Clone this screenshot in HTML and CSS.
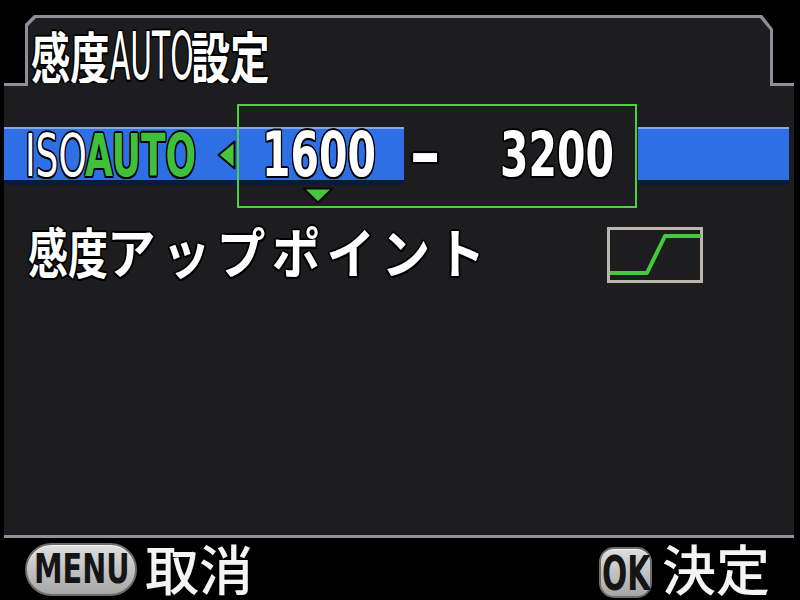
FILE: index.html
```html
<!DOCTYPE html>
<html lang="ja">
<head>
<meta charset="utf-8">
<title>感度AUTO設定</title>
<link rel="stylesheet" href="styles.css">
</head>
<body>
<div class="screen">
  <div class="tab">
    <div class="tab-in">
      <h1 class="title">
        <span class="seg w-t1"><span class="sx s70">感度</span></span>
        <span class="seg w-t2 lat"><span class="sx s45">AUTO</span></span>
        <span class="seg w-t3"><span class="sx s70">設定</span></span>
      </h1>
    </div>
  </div>
  <div class="body">
    <div class="row1">
      <div class="bar bar-left">
        <span class="seg w-iso lat iso"><span class="sx s62">ISO</span></span>
        <span class="seg w-auto lat auto"><span class="sx s62">AUTO</span></span>
        <svg class="tri-left" width="19" height="30" viewBox="0 0 19 30"><polygon points="1.5,15 17.5,1.5 17.5,28.5" fill="#45c83c" stroke="#0b0b0b" stroke-width="2" stroke-linejoin="round"/></svg>
        <span class="seg w-num1 lat num"><span class="sx s66">1600</span></span>
      </div>
      <div class="mid">
        <span class="seg w-dash lat num"><span class="sx dash">-</span></span>
        <span class="seg w-num2 lat num"><span class="sx s66">3200</span></span>
      </div>
      <div class="bar bar-right"></div>
      <div class="selbox"></div>
      <svg class="tri-down" width="32" height="17" viewBox="0 0 32 17"><polygon points="1.5,1.5 30.5,1.5 16,15.5" fill="#45c83c" stroke="#0b0b0b" stroke-width="2" stroke-linejoin="round"/></svg>
    </div>
    <div class="row2">
      <span class="label2"><span class="seg w-k"><span class="sx s74">感度</span></span><span class="seg w-kana"><span class="sx s90 kana">アップポイント</span></span></span>
      <svg class="curve" width="96" height="56" viewBox="0 0 96 56">
        <rect x="1.5" y="1.5" width="93" height="53" fill="none" stroke="#bdb6ae" stroke-width="3"/>
        <polyline points="3,46 40,46 58,9 94,9" fill="none" stroke="#44c83c" stroke-width="4" stroke-linejoin="round"/>
      </svg>
    </div>
  </div>
  <div class="footer">
    <span class="pill menu"><span class="seg w-menu lat"><span class="sx s70">MENU</span></span></span>
    <span class="ftxt">取消</span>
    <span class="spacer"></span>
    <span class="pill ok"><span class="seg w-ok lat"><span class="sx s62">OK</span></span></span>
    <span class="ftxt ftxt-ok">決定</span>
  </div>
</div>
</body>
</html>
```
FILE: styles.css
```css
:root {
  --panel: #1d1d1f;
  --line: #8d9096;
  --ol: 2px 0 0 #000, -2px 0 0 #000, 0 2px 0 #000, 0 -2px 0 #000,
        1.5px 1.5px 0 #000, -1.5px 1.5px 0 #000, 1.5px -1.5px 0 #000, -1.5px -1.5px 0 #000;
}

* { box-sizing: border-box; }

body {
  margin: 0;
  background: #000;
}

.screen {
  width: 800px;
  height: 600px;
  display: flex;
  flex-direction: column;
  background: #000;
  color: #fff;
  font-family: "Noto Sans CJK JP", sans-serif;
  overflow: hidden;
}

.lat { font-family: "DejaVu Sans", sans-serif; }

.seg {
  display: inline-block;
  flex: none;
  white-space: nowrap;
}

.sx {
  display: inline-block;
  white-space: nowrap;
  transform-origin: 0 50%;
}
.s45 { transform: scaleX(0.45); }
.s62 { transform: scaleX(0.62); }
.s66 { transform: scaleX(0.66); }
.s70 { transform: scaleX(0.7); }
.s74 { transform: scaleX(0.74); }
.s90 { transform: scaleX(0.9); }

/* ---- header tab ---- */
.tab {
  flex: none;
  margin: 15px 0 0 25px;
  width: 748px;
  height: 68px;
  background: var(--line);
  display: flex;
  flex-direction: column;
  clip-path: polygon(9px 0, calc(100% - 11px) 0, 100% 14px, 100% 100%, 0 100%, 0 9px);
}

.tab-in {
  flex: 1;
  margin: 3px 3px 0;
  background: var(--panel);
  clip-path: polygon(8px 0, calc(100% - 10px) 0, 100% 12px, 100% 100%, 0 100%, 0 8px);
}

.title {
  margin: 0;
  padding: 6px 0 0 3px;
  display: flex;
  align-items: baseline;
  font-size: 56px;
  font-weight: 700;
  line-height: 1;
  text-shadow: var(--ol);
}
.title .lat { font-size: 66px; font-weight: 400; }
.w-t1 { width: 79px; }
.w-t2 { width: 81px; }
.w-t3 { width: 80px; }

/* ---- panel body ---- */
.body {
  flex: none;
  margin-left: 4px;
  width: 790px;
  height: 455px;
  border-bottom: 3px solid var(--line);
  background:
    linear-gradient(var(--line), var(--line)) left top / 24px 3px no-repeat,
    linear-gradient(var(--line), var(--line)) right top / 24px 3px no-repeat,
    var(--panel);
}

.row1 {
  position: relative;
  margin-top: 21px;
  height: 104px;
  padding-top: 23px;
  display: flex;
  align-items: flex-start;
}

.bar {
  flex: none;
  height: 58px;
  border-top: 2px solid #86a6ea;
  border-bottom: 5px solid #0b1a3a;
  background: #2f6fe6;
}

.bar-left {
  width: 400px;
  padding-left: 21px;
  display: flex;
  align-items: baseline;
}

.mid {
  flex: none;
  height: 58px;
  padding-top: 2px;
  display: flex;
  align-items: baseline;
}

.bar-right {
  width: 151px;
  margin-left: 4px;
}

.iso {
  font-size: 58px;
  line-height: 51px;
  color: #fff;
  text-shadow: var(--ol);
}
.auto {
  font-size: 58px;
  line-height: 51px;
  font-weight: 700;
  color: #3fbf3a;
  text-shadow: var(--ol);
}
.w-iso { width: 60px; }
.w-auto { width: 113px; }

.tri-left {
  flex: none;
  align-self: center;
  margin-left: 19px;
}

.num {
  font-size: 62px;
  line-height: 51px;
  font-weight: 700;
  color: #fff;
  text-shadow: var(--ol);
}
.w-num1 { width: 115px; margin-left: 26px; }

.w-dash {
  width: 96px;
  padding-left: 5px;
}
.dash { transform: scaleX(1.25); }

.w-num2 { width: 134px; }

.selbox {
  position: absolute;
  left: 233px;
  top: 0;
  width: 400px;
  height: 104px;
  border: 2px solid #4fcf3f;
}

.tri-down {
  position: absolute;
  left: 298px;
  top: 83px;
}

.row2 {
  margin-top: 12px;
  height: 62px;
  padding: 0 91px 0 24px;
  display: flex;
  align-items: center;
  justify-content: space-between;
}

.label2 {
  display: flex;
  font-size: 54px;
  font-weight: 700;
  line-height: 1;
  text-shadow: var(--ol);
}
.w-k { width: 79px; }
.w-kana { width: 380px; }
.kana { letter-spacing: 7px; }

.curve {
  flex: none;
  margin-top: 8px;
}

/* ---- footer ---- */
.footer {
  flex: 1;
  display: flex;
  align-items: flex-start;
  padding: 3px 30px 0 25px;
}

.pill {
  flex: none;
  display: flex;
  align-items: center;
  justify-content: center;
  color: #151515;
  font-weight: 700;
  background: linear-gradient(#dedede, #c0c0c0 55%, #a6a6a6);
  border: 2px solid #6c6c6c;
  box-shadow: inset 0 1px 0 #f4f4f4;
}

.menu {
  width: 112px;
  height: 53px;
  margin-top: 2px;
  border-radius: 27px;
  font-size: 41px;
  line-height: 1;
}
.w-menu { width: 95px; }

.ok {
  width: 53px;
  height: 51px;
  border-radius: 15px;
  margin-top: 6px;
  font-size: 48px;
  line-height: 1;
}
.w-ok { width: 48px; }

.ftxt {
  flex: none;
  margin-left: 8px;
  font-size: 54px;
  font-weight: 500;
  line-height: 54px;
  color: #f4f4f4;
}
.ftxt-ok { margin-left: 10px; }

.spacer { flex: 1; }
```
